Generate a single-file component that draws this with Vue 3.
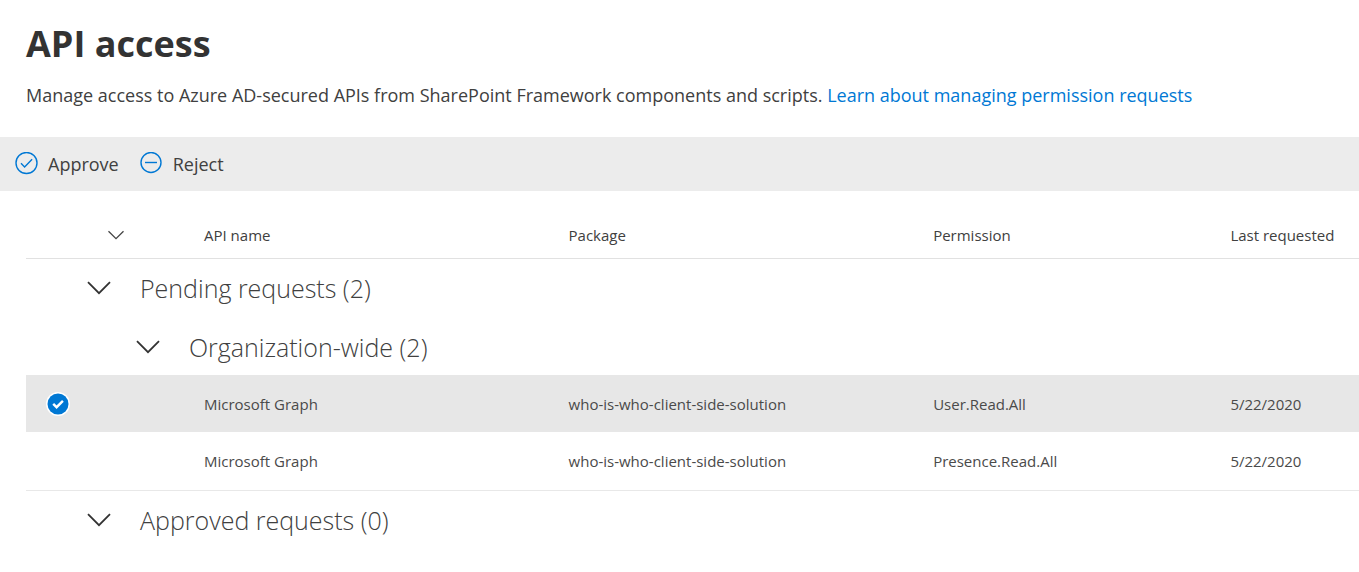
<script setup>
import { ref, computed } from 'vue'

const selected = ref(['user-read'])

const columns = [
  { key: 'api', label: 'API name', cls: 'col-api' },
  { key: 'pkg', label: 'Package', cls: 'col-pkg' },
  { key: 'permission', label: 'Permission', cls: 'col-permission' },
  { key: 'date', label: 'Last requested', cls: 'col-date' },
]

const requests = [
  { id: 'user-read', api: 'Microsoft Graph', pkg: 'who-is-who-client-side-solution', permission: 'User.Read.All', date: '5/22/2020' },
  { id: 'presence-read', api: 'Microsoft Graph', pkg: 'who-is-who-client-side-solution', permission: 'Presence.Read.All', date: '5/22/2020' },
]

const open = ref({ pending: true, org: true, approved: true })
const anyOpen = computed(() => open.value.pending || open.value.approved)

function toggle(key) {
  open.value[key] = !open.value[key]
}

function toggleAll() {
  const next = !anyOpen.value
  open.value = { pending: next, org: next, approved: next }
}
</script>

<template>
  <main class="page">
    <header class="intro">
      <h1>API access</h1>
      <p>
        Manage access to Azure AD-secured APIs from SharePoint Framework components and scripts.
        <a href="#learn">Learn about managing permission requests</a>
      </p>
    </header>

    <div class="commands" role="toolbar" aria-label="Request actions">
      <button type="button" class="command">
        <svg width="24" height="24" viewBox="0 0 24 24" aria-hidden="true">
          <circle cx="12.5" cy="11" r="10.5" />
          <path d="M7 11.3l3.6 3.6 7.5-7.6" />
        </svg>
        <span>Approve</span>
      </button>
      <button type="button" class="command">
        <svg width="24" height="24" viewBox="0 0 24 24" aria-hidden="true">
          <circle cx="12" cy="10.5" r="10" />
          <path d="M6 10.5h12" />
        </svg>
        <span>Reject</span>
      </button>
    </div>

    <div class="list">
      <table>
        <colgroup>
          <col class="col-check" />
          <col class="col-expand" />
          <col v-for="c in columns" :key="c.key" :class="c.cls" />
        </colgroup>
        <thead>
          <tr>
            <td></td>
            <td>
              <button type="button" class="expand-all" aria-label="Collapse all groups" @click="toggleAll">
                <svg width="18" height="10" viewBox="0 0 18 10" aria-hidden="true">
                  <path d="M1.5 1.2L9 8.6l7.5-7.4" />
                </svg>
              </button>
            </td>
            <th v-for="c in columns" :key="c.key" scope="col">{{ c.label }}</th>
          </tr>
        </thead>
        <tbody>
          <tr class="group">
            <td></td>
            <td colspan="5">
              <button type="button" class="group-toggle" :aria-expanded="open.pending" @click="toggle('pending')">
                <svg width="24" height="14" viewBox="0 0 24 14" aria-hidden="true">
                  <path d="M1 1.2l11 11 11-11" />
                </svg>
                <span>Pending requests (2)</span>
              </button>
            </td>
          </tr>
          <tr v-if="open.pending" class="group nested">
            <td></td>
            <td colspan="5">
              <button type="button" class="group-toggle" :aria-expanded="open.org" @click="toggle('org')">
                <svg width="24" height="14" viewBox="0 0 24 14" aria-hidden="true">
                  <path d="M1 1.2l11 11 11-11" />
                </svg>
                <span>Organization-wide (2)</span>
              </button>
            </td>
          </tr>
          <template v-if="open.pending && open.org">
            <tr v-for="r in requests" :key="r.id" class="item" :class="{ selected: selected.includes(r.id) }">
              <td>
                <label class="check">
                  <input v-model="selected" type="checkbox" :value="r.id" :aria-label="`Select ${r.permission}`" />
                  <svg v-if="selected.includes(r.id)" width="24" height="24" viewBox="0 0 24 24" aria-hidden="true">
                    <circle class="ring" cx="12" cy="12" r="12" />
                    <circle class="disc" cx="12" cy="12" r="10.5" />
                    <path d="M7.2 11.8l3.4 3.4 6.3-6.4" />
                  </svg>
                </label>
              </td>
              <td></td>
              <td v-for="c in columns" :key="c.key">{{ r[c.key] }}</td>
            </tr>
          </template>
        </tbody>
        <tbody>
          <tr class="group">
            <td></td>
            <td colspan="5">
              <button type="button" class="group-toggle" :aria-expanded="open.approved" @click="toggle('approved')">
                <svg width="24" height="14" viewBox="0 0 24 14" aria-hidden="true">
                  <path d="M1 1.2l11 11 11-11" />
                </svg>
                <span>Approved requests (0)</span>
              </button>
            </td>
          </tr>
        </tbody>
      </table>
    </div>
  </main>
</template>

<style>
body {
  background: #fff;
}
</style>

<style scoped>
.page {
  font-family: 'Open Sans', 'Noto Sans', sans-serif;
  color: #404040;
}

.intro {
  padding: 18px 26px 28px;
}

h1 {
  margin: 0 0 11px;
  font-size: 36px;
  line-height: 52px;
  font-weight: 700;
  color: #333;
}

p {
  margin: 0;
  font-size: 18px;
  line-height: 28px;
}

a {
  color: #0078d4;
  text-decoration: none;
}

button {
  border: 0;
  padding: 0;
  background: none;
  color: inherit;
  font-family: inherit;
  font-weight: inherit;
  cursor: pointer;
}

svg {
  display: block;
  flex: none;
  fill: none;
}

.commands {
  display: flex;
  gap: 20px;
  padding: 0 14px;
  background: #ececec;
}

.command {
  display: flex;
  align-items: center;
  gap: 10px;
  height: 54px;
  font-size: 18px;
}

.command svg {
  stroke: #0078d4;
  stroke-width: 1.4;
}

.list {
  padding: 20px 0 0 26px;
}

table {
  width: 100%;
  border-collapse: collapse;
  table-layout: fixed;
}

.col-check {
  width: 61px;
}

.col-expand {
  width: 117px;
}

.col-api,
.col-pkg {
  width: 27.35%;
}

.col-permission {
  width: 22.3%;
}

td,
th {
  padding: 0;
  text-align: left;
  font-size: 15px;
  font-weight: inherit;
  white-space: nowrap;
}

thead tr {
  height: 47px;
  border-bottom: 1px solid #e1e1e1;
}

thead td,
thead th,
.group td {
  padding-top: 2px;
}

tbody + tbody {
  border-top: 1px solid #e8e8e8;
}

.expand-all {
  display: block;
  padding-left: 20px;
}

.expand-all svg {
  stroke: #444;
  stroke-width: 1.3;
}

.group,
.item {
  height: 58px;
}

.nested {
  height: 59px;
}

.selected {
  height: 57px;
  background: #e7e7e7;
}

.item td {
  color: #4a4a4a;
}

.group-toggle {
  display: flex;
  align-items: center;
  gap: 29px;
  font-size: 25px;
  font-weight: 300;
}

.group-toggle svg {
  stroke: #333;
  stroke-width: 1.8;
}

.nested .group-toggle {
  margin-left: 49px;
}

.check {
  display: grid;
  width: 24px;
  height: 24px;
  margin-left: 20px;
}

.check input,
.check svg {
  grid-area: 1 / 1;
}

.check input {
  appearance: none;
  width: 24px;
  height: 24px;
  margin: 0;
}

.check svg {
  pointer-events: none;
}

.ring {
  fill: #fff;
}

.disc {
  fill: #0078d4;
}

.check path {
  stroke: #fff;
  stroke-width: 2.4;
}
</style>
